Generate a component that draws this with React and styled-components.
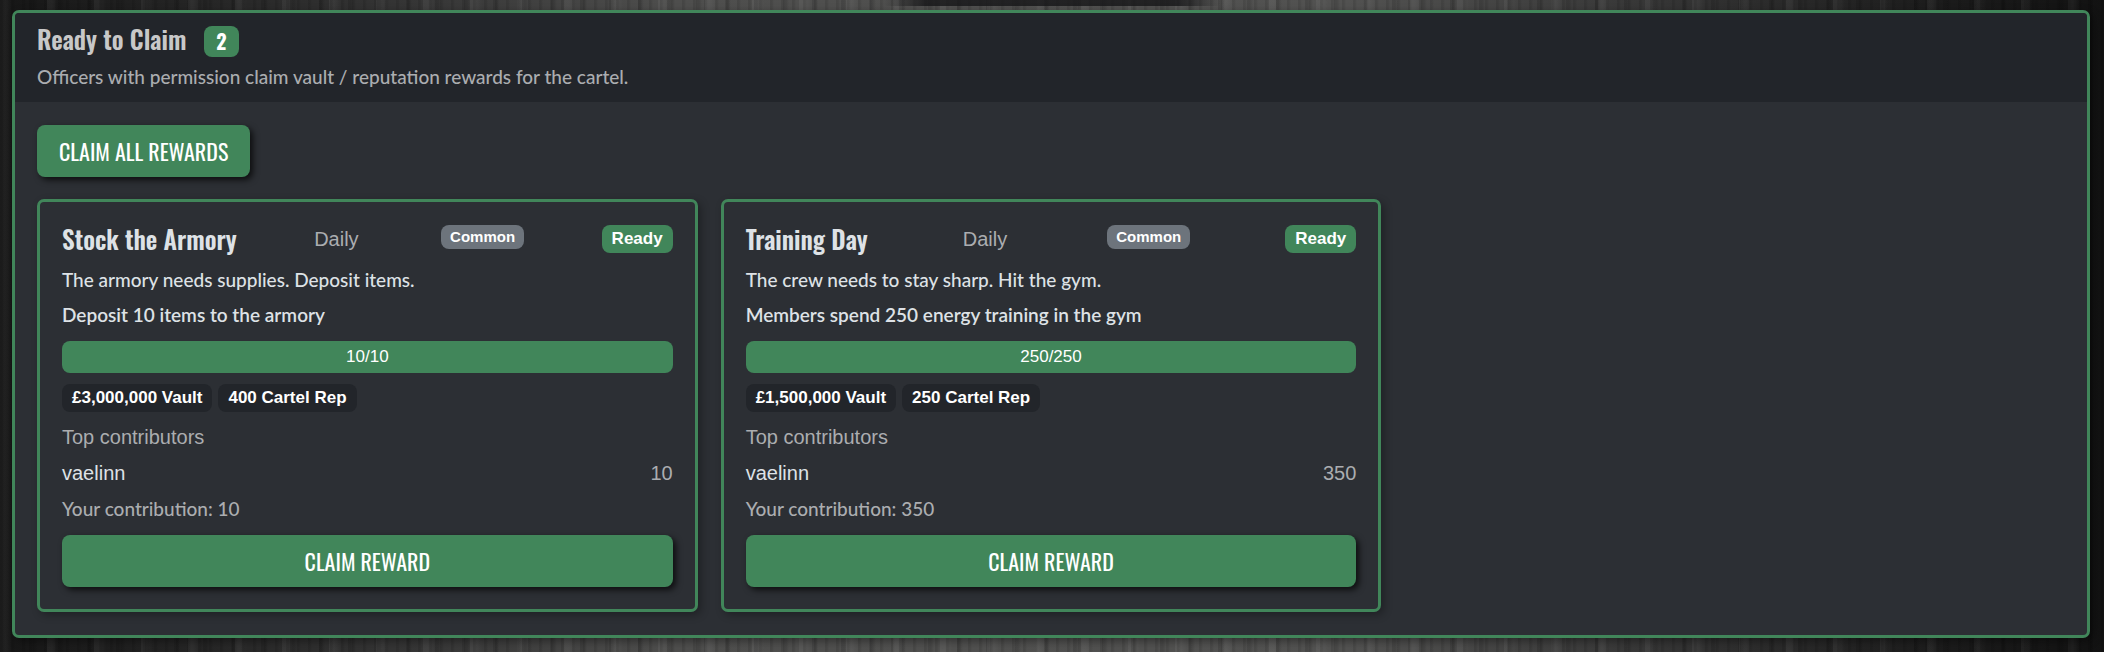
import React from 'react';
import styled, { createGlobalStyle } from 'styled-components';

const green = '#41865a';
const condensed = '"Oswald", "Liberation Sans Narrow", "Roboto Condensed", "Liberation Sans", sans-serif';
const lato = '"Lato", sans-serif';

// Body background is a dark wood grain: fine vertical streaks over a wash that is lighter in the middle
const GlobalStyle = createGlobalStyle`
	* {
		box-sizing: border-box;
	}

	body {
		margin: 0;
		min-height: 100vh;
		color: #dee2e6;
		font-family: "Liberation Sans", Arial, sans-serif;
		font-size: 20px;
		line-height: 30px;
		background-color: #2a2a2a;
		background-image:
			linear-gradient(90deg, transparent 42%, rgba(22, 22, 24, 0.8) 44% 56%, transparent 58%),
			repeating-linear-gradient(90deg, rgba(0, 0, 0, 0.1) 0 2px, transparent 4px 11px),
			repeating-linear-gradient(90deg, rgba(0, 0, 0, 0.12) 0 3px, transparent 6px 29px),
			repeating-linear-gradient(90deg, rgba(255, 255, 255, 0.05) 0 5px, transparent 12px 47px),
			linear-gradient(90deg, #161616 0, #232323 8%, #363636 20%, #4e4e4d 32%, #50504f 45%, #525251 64%, #373737 78%, #1c1c1c 92%, #121212 100%);
		background-size: 100% 6px, auto, auto, auto, auto;
		background-repeat: no-repeat, repeat, repeat, repeat, repeat;
	}
`;

const Page = styled.main`
	padding: 10px 14px 14px 12px;
`;

const Panel = styled.section`
	border: 3px solid ${green};
	border-radius: 7px;
	background: #2c2f34;
	box-shadow: 3px 3px 8px rgba(0, 0, 0, 0.4);
	overflow: hidden;
`;

const PanelHeader = styled.header`
	padding: 13px 22px 10px;
	background: #22252a;
`;

const PanelTitle = styled.h2`
	display: flex;
	align-items: flex-start;
	gap: 18px;
	margin: 0 0 5px;
	color: #c8c8c8;
	font-family: ${condensed};
	font-size: 25px;
	font-weight: 600;
	line-height: 25px;
`;

const Count = styled.span`
	padding: 0 12px;
	border-radius: 8px;
	background: ${green};
	color: #fff;
	font-size: 20px;
	font-weight: 700;
	line-height: 31px;
`;

const Text = styled.p`
	margin: 0 0 ${props => props.$space || 0}px;
	color: ${props => (props.$muted ? '#abadb0' : '#dee2e6')};
	font-family: ${lato};
	font-size: 19px;
	font-weight: ${props => (props.$strong ? 600 : 500)};
`;

const PanelBody = styled.div`
	padding: 23px 22px;
`;

const Button = styled.button`
	display: block;
	width: ${props => (props.$block ? '100%' : 'auto')};
	padding: 11px 22px;
	border: 0;
	border-radius: 8px;
	background: ${green};
	box-shadow: 3px 3px 6px rgba(0, 0, 0, 0.7);
	color: #fff;
	font-family: ${condensed};
	font-size: 22px;
	line-height: 30px;
	text-transform: uppercase;
	cursor: pointer;
`;

const CardGrid = styled.div`
	display: grid;
	grid-template-columns: repeat(3, 1fr);
	gap: 23px;
	margin-top: 22px;
`;

const Card = styled.article`
	padding: 23px 22px 22px;
	border: 3px solid ${green};
	border-radius: 7px;
	box-shadow: 3px 3px 8px rgba(0, 0, 0, 0.3);
`;

const CardHeader = styled.div`
	display: flex;
	justify-content: space-between;
	align-items: flex-start;
	margin-bottom: 12px;
`;

const CardTitle = styled.h3`
	margin: 0;
	font-family: ${condensed};
	font-size: 25px;
	font-weight: 600;
	line-height: 28px;
`;

const Muted = styled.span`
	color: #abadb0;
`;

const Frequency = styled(Muted)`
	margin-right: 5px;
	line-height: 28px;
`;

const Badge = styled.span`
	padding: 0 ${props => (props.$small ? 9 : 10)}px;
	border-radius: 8px;
	background: ${props => props.$bg || '#22252a'};
	color: #fff;
	font-size: ${props => (props.$small ? 15 : 17)}px;
	font-weight: 700;
	line-height: ${props => (props.$small ? 24 : 28)}px;
`;

const Progress = styled.div`
	margin: 11px 0;
	border-radius: 8px;
	background: #22252a;
	overflow: hidden;
`;

const ProgressBar = styled.div`
	background: ${green};
	color: #fff;
	font-size: 17px;
	line-height: 32px;
	text-align: center;
`;

const Rewards = styled.div`
	display: flex;
	gap: 6px;
	margin-bottom: 10px;
`;

const Contributor = styled.div`
	display: flex;
	justify-content: space-between;
	margin: 6px 0;
`;

const missions = [
	{
		title: 'Stock the Armory',
		description: 'The armory needs supplies. Deposit items.',
		goal: 'Deposit 10 items to the armory',
		progress: 10,
		target: 10,
		rewards: ['£3,000,000 Vault', '400 Cartel Rep'],
		contributed: 10
	},
	{
		title: 'Training Day',
		description: 'The crew needs to stay sharp. Hit the gym.',
		goal: 'Members spend 250 energy training in the gym',
		progress: 250,
		target: 250,
		rewards: ['£1,500,000 Vault', '250 Cartel Rep'],
		contributed: 350
	}
];

const Mission = ({ mission }) => {
	const percent = (mission.progress / mission.target) * 100;

	return (
		<Card>
			<CardHeader>
				<CardTitle>{mission.title}</CardTitle>
				<Frequency>Daily</Frequency>
				<Badge $small $bg="#6d747c">Common</Badge>
				<Badge $bg={green}>Ready</Badge>
			</CardHeader>
			<Text $space={5}>{mission.description}</Text>
			<Text $strong>{mission.goal}</Text>
			<Progress>
				<ProgressBar style={{ width: `${percent}%` }}>{mission.progress}/{mission.target}</ProgressBar>
			</Progress>
			<Rewards>
				{mission.rewards.map(reward => <Badge key={reward}>{reward}</Badge>)}
			</Rewards>
			<Muted>Top contributors</Muted>
			<Contributor>
				<span>vaelinn</span>
				<Muted>{mission.contributed}</Muted>
			</Contributor>
			<Text $muted $space={11}>Your contribution: {mission.contributed}</Text>
			<Button type="button" $block>Claim Reward</Button>
		</Card>
	);
};

export default function App() {
	return (
		<Page>
			<GlobalStyle />
			<Panel>
				<PanelHeader>
					<PanelTitle>Ready to Claim <Count>{missions.length}</Count></PanelTitle>
					<Text $muted>Officers with permission claim vault / reputation rewards for the cartel.</Text>
				</PanelHeader>
				<PanelBody>
					<Button type="button">Claim All Rewards</Button>
					<CardGrid>
						{missions.map(mission => <Mission key={mission.title} mission={mission} />)}
					</CardGrid>
				</PanelBody>
			</Panel>
		</Page>
	);
}
